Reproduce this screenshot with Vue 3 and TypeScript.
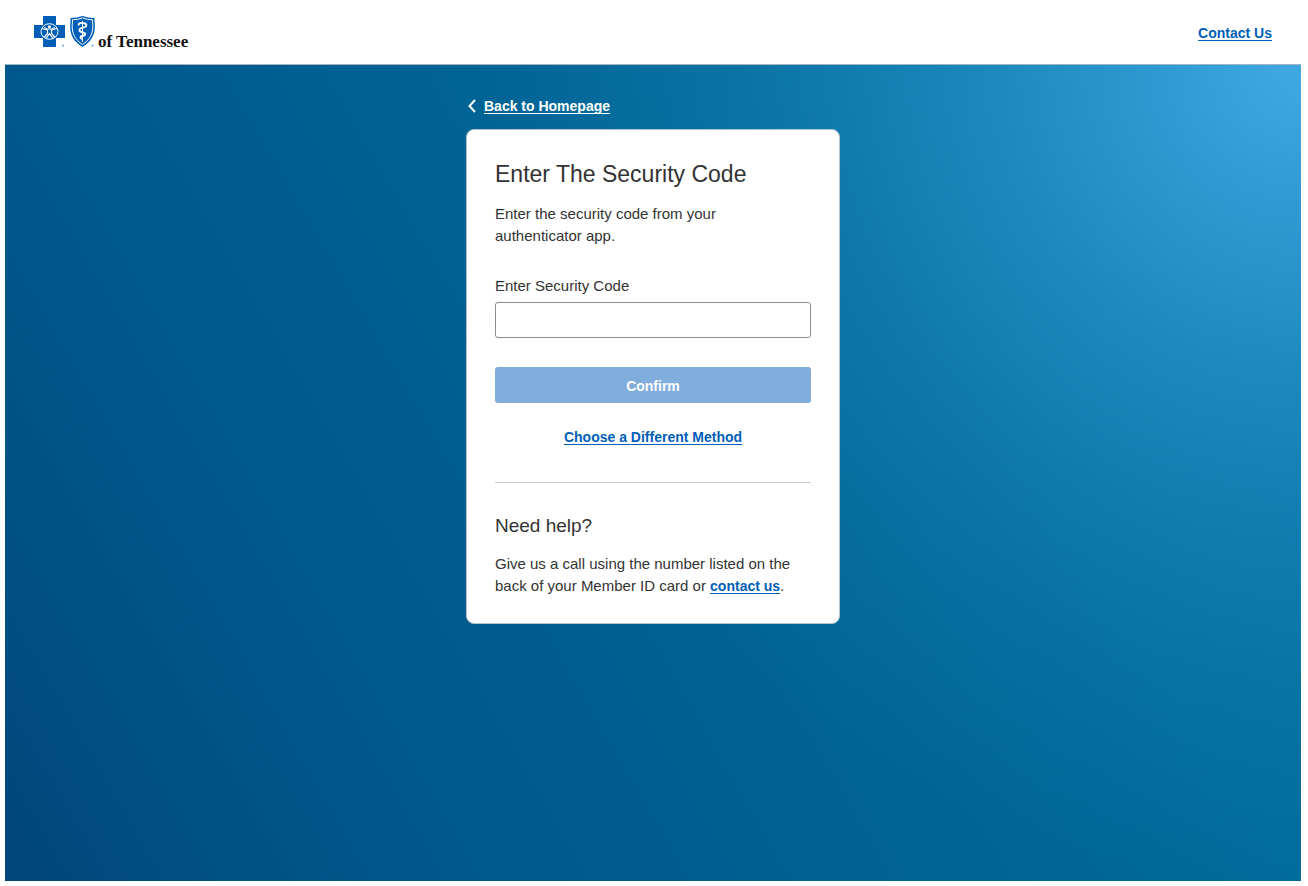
<script setup lang="ts">
import { ref } from 'vue'

const code = ref('')
</script>

<template>
  <div class="page">
    <header class="site-header">
      <div class="brand">
        <svg class="marks" width="64" height="34" viewBox="0 0 64 34" role="img" aria-label="Blue Cross Blue Shield">
          <path d="M9 1h13v9h9v13h-9v9H9v-9H0V10h9z" fill="#005eb8" />
          <g fill="none" stroke="#fff">
            <ellipse cx="15.500" cy="16.500" rx="8.500" ry="7.800" stroke-width="1" />
            <path d="M8 13.500l5.500 1.500v3.500L10 22.500M23 13.500l-5.500 1.500v3.500l3.500 4M12 23.500l3.500-5 3.500 5" stroke-width="1.200" />
            <path d="M10 12.500l3.500 1.500h4l3.500-1.500" stroke-width="1" />
          </g>
          <circle cx="15.500" cy="11.800" r="1.600" fill="#fff" />
          <circle cx="29" cy="30.500" r="1" fill="#6ca0d6" />
          <path d="M36.500 3Q43 3 48.500 1 54 3 60.500 3q-.3 3 .3 6C61.500 20 57 27 48.500 32 40 27 35.500 20 36.200 9q.6-3 .3-6z" fill="#005eb8" />
          <path d="M38.500 4.800q5 0 10-1.900 5 1.900 10 1.900-.2 2 .3 4.500C59.300 19 55.500 25 48.500 29.500 41.500 25 37.700 19 38.200 9.300q.5-2.500.3-4.500z" fill="none" stroke="#fff" stroke-width="1" />
          <path d="M48.500 6v21" stroke="#fff" stroke-width="1" />
          <path d="M44.500 10.500q0-3 4-2.500c5.500.5 5 4 0 4.800-4.500.8-4 4 0 4.500 4 .6 3.500 3.200 0 3.700-3 .5-2.500 2.500 0 3" fill="none" stroke="#fff" stroke-width="1.800" />
          <circle cx="58.500" cy="30.500" r="1" fill="#6ca0d6" />
        </svg>
        <span class="brand-name">of Tennessee</span>
      </div>
      <a class="link" href="#contact">Contact Us</a>
    </header>

    <main class="backdrop">
      <div class="column">
        <div class="back">
          <svg width="8" height="14" viewBox="0 0 8 14" aria-hidden="true">
            <path d="M7 1L1.500 7 7 13" fill="none" stroke="#fff" stroke-width="2" />
          </svg>
          <a class="link light" href="#home">Back to Homepage</a>
        </div>

        <form class="card" @submit.prevent>
          <h1>Enter The Security Code</h1>
          <p class="intro">Enter the security code from your authenticator app.</p>
          <label for="code">Enter Security Code</label>
          <input id="code" v-model="code" type="text" autocomplete="one-time-code" />
          <button type="submit" :disabled="!code">Confirm</button>
          <div class="alternate">
            <a class="link" href="#methods">Choose a Different Method</a>
          </div>
          <section class="help">
            <h2>Need help?</h2>
            <p>Give us a call using the number listed on the back of your Member ID card or <a class="link" href="#contact">contact us</a>.</p>
          </section>
        </form>
      </div>
    </main>
  </div>
</template>

<style>
html,
body,
#app {
  height: 100%;
}
body {
  margin: 0;
  background: #fff;
}
</style>

<style scoped>
.page {
  box-sizing: border-box;
  min-height: 100%;
  padding: 0 7px 5px 5px;
  display: flex;
  flex-direction: column;
  font-family: "Liberation Sans", Arial, sans-serif;
  font-size: 15px;
  line-height: 22px;
  color: #333;
}
.site-header {
  box-sizing: border-box;
  height: 65px;
  padding: 2px 29px 0;
  display: flex;
  align-items: center;
  justify-content: space-between;
  border-bottom: 1px solid #a6b4bc;
}
.brand {
  display: flex;
  align-items: flex-end;
  padding-bottom: 2px;
}
.marks {
  display: block;
}
.brand-name {
  font-family: "Liberation Serif", "Times New Roman", serif;
  font-size: 17px;
  font-weight: 700;
  line-height: 14px;
  color: #111;
}
.link {
  color: #005eb8;
  font-size: 14px;
  font-weight: 700;
  text-decoration: underline;
  text-decoration-thickness: 1px;
  text-underline-offset: 2px;
  text-decoration-skip-ink: none;
}
.light {
  color: #fff;
}
.backdrop {
  flex: 1;
  padding: 30px 16px 40px;
  background:
    radial-gradient(
      circle at 100% 0,
      #40a9e2 0,
      rgba(64, 169, 226, 0.72) 150px,
      rgba(64, 169, 226, 0.46) 300px,
      rgba(64, 169, 226, 0.25) 460px,
      rgba(64, 169, 226, 0.11) 620px,
      rgba(64, 169, 226, 0) 820px
    ),
    linear-gradient(60deg, #00467a 0%, #005286 14%, #00598e 30%, #006495 53%, #006c9d 75%, #0073a6 100%);
}
.column {
  max-width: 374px;
  margin: 0 auto;
}
.back {
  display: flex;
  align-items: center;
  gap: 8px;
  padding-left: 2px;
  margin-bottom: 12px;
}
.card {
  box-sizing: border-box;
  padding: 30px 28px 26px;
  border: 1px solid #b4c3cc;
  border-radius: 8px;
  background: #fff;
}
h1,
h2,
p {
  margin: 0;
  font-weight: 400;
}
h1 {
  font-size: 23px;
  line-height: 28px;
}
.intro {
  max-width: 260px;
  margin: 15px 0 28px;
}
label {
  display: block;
  margin-bottom: 5px;
}
input {
  box-sizing: border-box;
  display: block;
  width: 100%;
  height: 36px;
  padding: 0 12px;
  border: 1px solid #8c8c8c;
  border-radius: 3px;
  font: inherit;
}
button {
  display: block;
  width: 100%;
  height: 36px;
  margin: 29px 0 23px;
  padding: 2px 12px 0;
  border: 0;
  border-radius: 3px;
  background: #005eb8;
  color: #fff;
  font: inherit;
  font-size: 14px;
  font-weight: 700;
}
button:disabled {
  background: #80addc;
}
.alternate {
  text-align: center;
}
.help {
  margin-top: 34px;
  padding-top: 31px;
  border-top: 1px solid #ccc;
}
h2 {
  margin-bottom: 15px;
  font-size: 19px;
  line-height: 24px;
}
</style>
